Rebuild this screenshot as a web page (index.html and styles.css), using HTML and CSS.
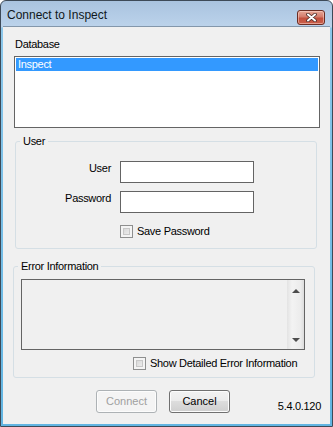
FILE: index.html
```html
<!DOCTYPE html>
<html lang="en">
  <head>
    <meta charset="UTF-8" />
    <title>Connect to Inspect</title>
    <link rel="stylesheet" href="styles.css">
  </head>
  <body>
    <div class="window">
      <!-- Title bar -->
      <div class="titlebar">
        <span class="title">Connect to Inspect</span>
        <button type="button" class="close-button" aria-label="Close">
          <svg width="11" height="9" viewBox="0 0 11 9">
            <path d="M2 1.5 L9 7.5 M9 1.5 L2 7.5" stroke="#4a2a26" stroke-width="3.6" stroke-linecap="round" />
            <path d="M2 1.5 L9 7.5 M9 1.5 L2 7.5" stroke="#fff" stroke-width="2" stroke-linecap="round" />
          </svg>
        </button>
      </div>

      <div class="dialog">
        <div class="field-label">Database</div>
        <div class="listbox">
          <div class="list-item selected">Inspect</div>
        </div>

        <!-- User group -->
        <fieldset class="group user-group">
          <legend>User</legend>
          <div class="login-grid">
            <label for="user">User</label>
            <input type="text" id="user" class="text-input" />
            <label for="password">Password</label>
            <input type="password" id="password" class="text-input" />
            <label class="check save-check"><span class="checkbox"></span>Save Password</label>
          </div>
        </fieldset>

        <!-- Error group -->
        <fieldset class="group error-group">
          <legend>Error Information</legend>
          <div class="error-box">
            <div class="scrollbar">
              <span class="arrow up"></span>
              <span class="arrow down"></span>
            </div>
          </div>
          <label class="check detail-check"><span class="checkbox"></span>Show Detailed Error Information</label>
        </fieldset>

        <div class="footer">
          <button type="button" class="btn" disabled>Connect</button>
          <button type="button" class="btn">Cancel</button>
          <span class="version">5.4.0.120</span>
        </div>
      </div>
    </div>
  </body>
</html>
```

FILE: styles.css
```css
body {
  margin: 0;
  padding: 0;
  font-family: "Liberation Sans", Arial, sans-serif;
  font-size: 11px;
  line-height: 13px;
  letter-spacing: -0.3px;
  color: #000;
}

.window {
  width: 333px;
  height: 427px;
  box-sizing: border-box;
  border: 1px solid #3d4a58;
  border-radius: 6px 6px 0 0;
  background: linear-gradient(#a9c3df, #bcd3eb 26px, #8cc7ea 27px, #62b5e2);
  display: flex;
  flex-direction: column;
}

.titlebar {
  height: 25px;
  display: flex;
  justify-content: space-between;
  align-items: flex-start;
  padding: 0 7px 0 6px;
}

.title {
  font-size: 12px;
  line-height: 14px;
  letter-spacing: 0;
  margin-top: 7px;
  color: #101820;
}

.close-button {
  width: 28px;
  height: 15px;
  margin-top: 9px;
  padding: 0;
  border: 1px solid #6b2c22;
  border-radius: 3px;
  background: linear-gradient(#e6a796, #d47b6b 45%, #c34f3c 55%, #c9604c);
  box-shadow: inset 0 0 0 1px rgba(255, 220, 210, 0.5);
  display: flex;
  align-items: center;
  justify-content: center;
}

.dialog {
  flex: 1;
  margin: 0 2px 2px;
  background-color: #f0f0f0;
  border-top: 1px solid #8397ab;
  padding-top: 11px;
}

.field-label {
  margin-left: 12px;
}

.listbox {
  width: 306px;
  height: 72px;
  box-sizing: border-box;
  margin: 5px 0 0 11px;
  border: 1px solid #646464;
  background-color: #fff;
  padding: 1px;
}

.list-item {
  height: 13px;
  padding-left: 2px;
}

.selected {
  background-color: #3399ff;
  color: #fff;
}

/* Group boxes */
.group {
  width: 302px;
  box-sizing: border-box;
  border: 1px solid #d5dfe5;
  border-radius: 3px;
  padding: 0;
  min-width: 0;
}

.group legend {
  line-height: 14px;
  padding: 0 3px;
  margin-left: 4px;
}

.user-group {
  margin: 6px 0 0 12px;
  padding: 13px 0 10px;
}

.login-grid {
  display: grid;
  grid-template-columns: 95px 134px;
  column-gap: 9px;
  row-gap: 8px;
}

.login-grid > label {
  text-align: right;
  margin-top: 1px;
}

.text-input {
  width: 134px;
  height: 22px;
  box-sizing: border-box;
  margin: 0;
  border: 1px solid #646464;
  background-color: #fff;
  font: inherit;
}

.check {
  display: flex;
  align-items: center;
  gap: 4px;
  height: 13px;
}

.checkbox {
  width: 13px;
  height: 13px;
  box-sizing: border-box;
  border: 1px solid #8e8f8f;
  background: linear-gradient(135deg, #cfcfcf, #f6f6f6);
  box-shadow: inset 0 0 0 2px #f4f4f4, inset 0 0 0 3px #c8c8c8;
}

.login-grid .save-check {
  grid-column: 2;
  margin-top: 4px;
  text-align: left;
}

.error-group {
  margin: 10px 0 0 10px;
  padding: 6px 0 7px;
}

.error-box {
  width: 284px;
  height: 71px;
  box-sizing: border-box;
  margin-left: 7px;
  border: 1px solid #646464;
  background-color: #f0f0f0;
  display: flex;
  justify-content: flex-end;
}

.scrollbar {
  width: 17px;
  background: linear-gradient(90deg, #e3e3e3, #f3f3f3 30%, #ececec 80%, #dcdcdc);
  display: flex;
  flex-direction: column;
  justify-content: space-between;
  align-items: center;
  padding: 9px 0 7px;
}

.arrow {
  width: 0;
  height: 0;
  border-left: 4px solid transparent;
  border-right: 4px solid transparent;
}

.arrow.up {
  border-bottom: 4px solid #4d4d4d;
}

.arrow.down {
  border-top: 4px solid #4d4d4d;
}

.detail-check {
  margin: 7px 0 0 119px;
  gap: 4px;
}

/* Footer */
.footer {
  display: flex;
  align-items: flex-start;
  margin-top: 12px;
  padding: 0 9px 0 93px;
  gap: 12px;
}

.btn {
  width: 61px;
  height: 23px;
  box-sizing: border-box;
  padding: 0;
  border: 1px solid #707070;
  border-radius: 3px;
  background: linear-gradient(#f2f2f2, #ebebeb 50%, #dddddd 50%, #cfcfcf);
  box-shadow: inset 0 0 0 1px #fcfcfc;
  font: inherit;
  color: #000;
}

.btn:disabled {
  border-color: #adb2b5;
  background: #f4f4f4;
  color: #a0a0a0;
}

.version {
  margin-left: auto;
  margin-top: 10px;
}
```
